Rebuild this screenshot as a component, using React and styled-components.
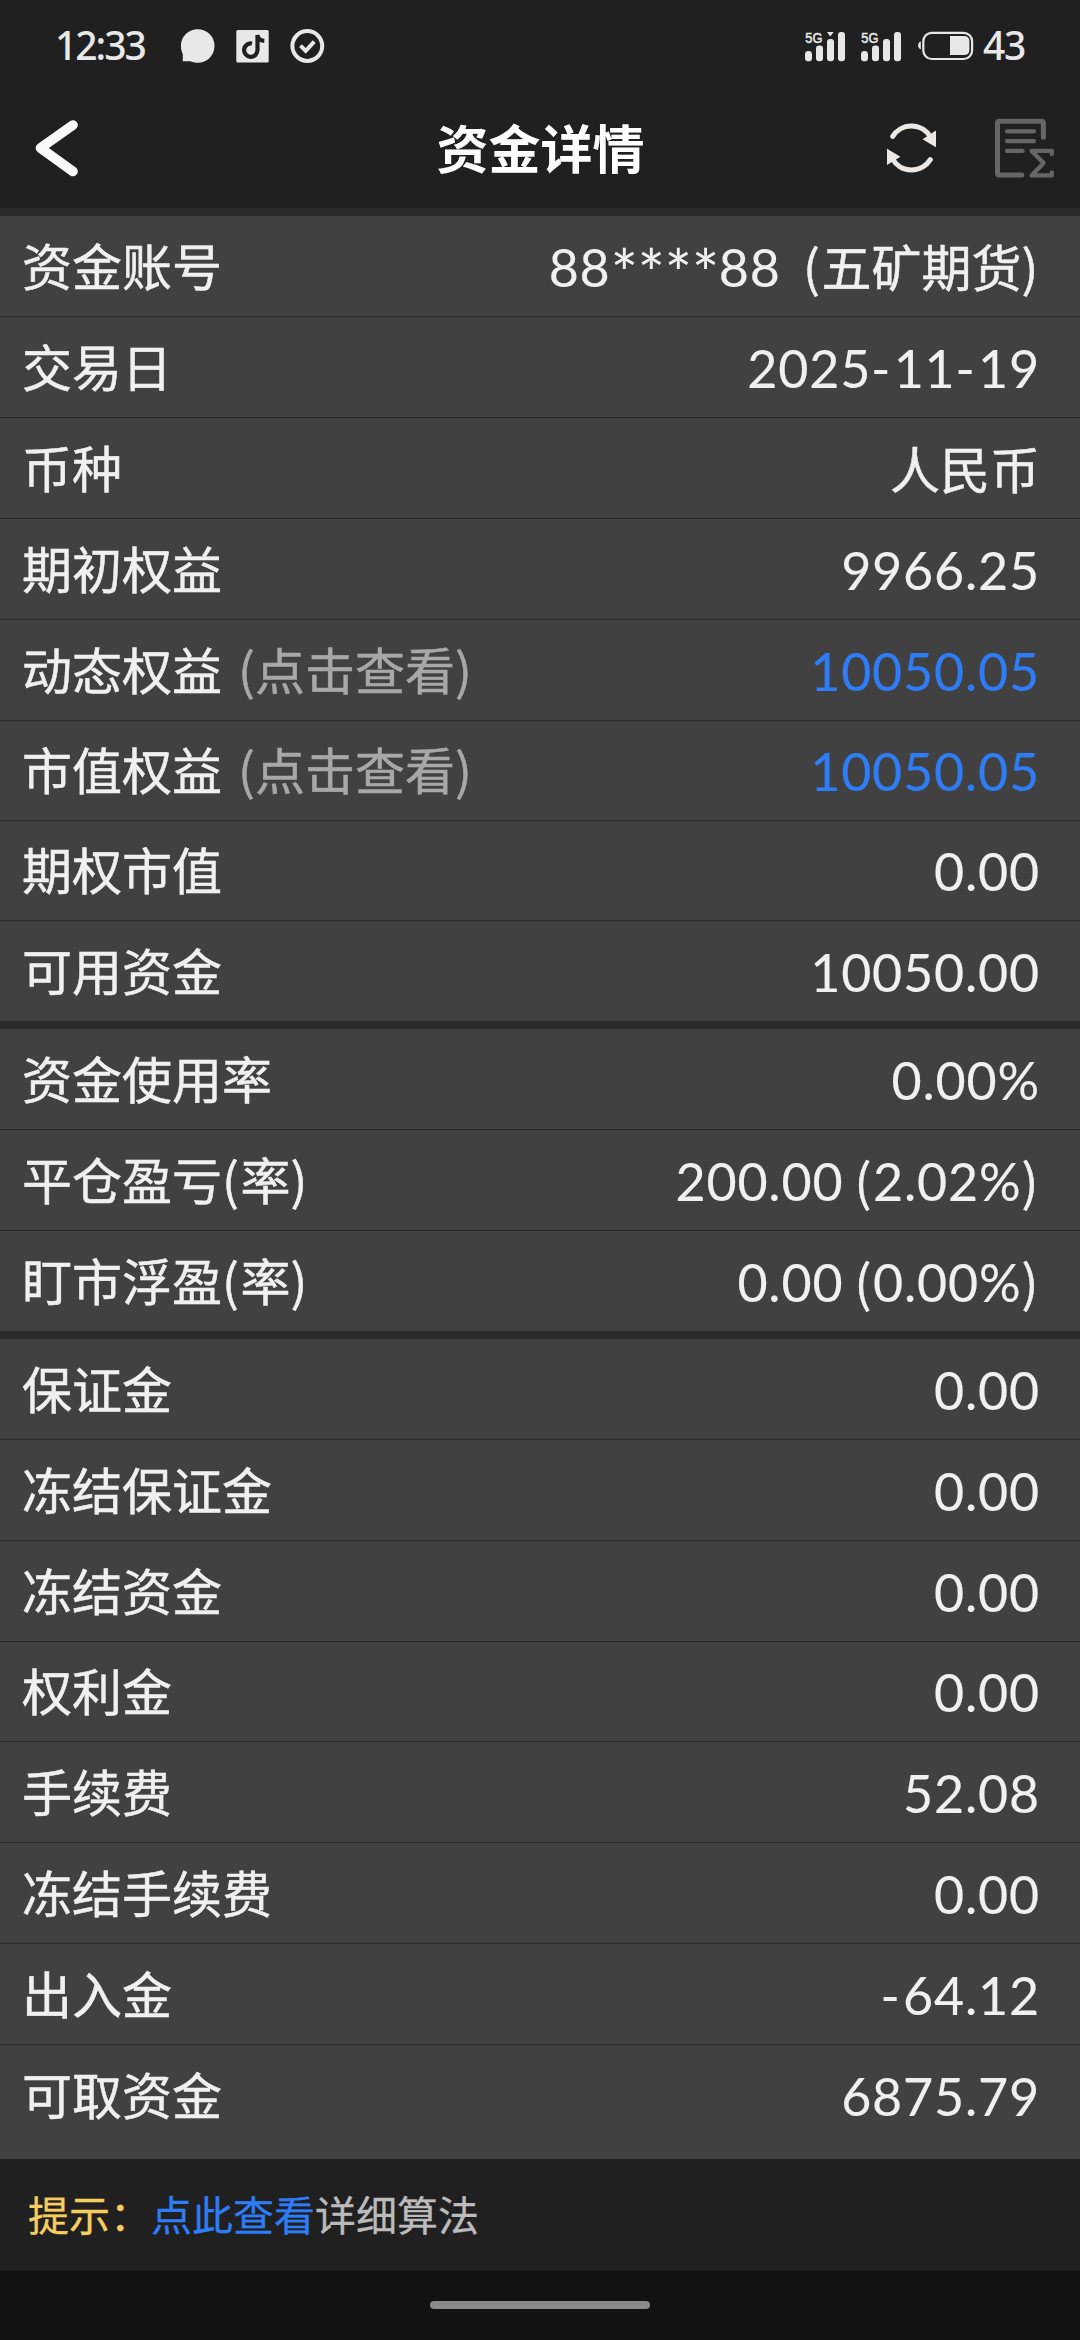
import React from 'react';
import styled, { createGlobalStyle } from 'styled-components';

const GlobalStyle = createGlobalStyle`
  * {
    box-sizing: border-box;
  }
  body {
    margin: 0;
    background-color: #121212;
    font-family: 'Noto Sans CJK SC', sans-serif;
  }
  svg {
    display: block;
    flex-shrink: 0;
  }
`;

const Screen = styled.div`
  display: flex;
  flex-direction: column;
  width: 1080px;
  height: 2340px;
  overflow: hidden;
`;

const StatusBar = styled.div`
  display: flex;
  align-items: center;
  justify-content: space-between;
  height: 92px;
  padding: 0 55px;
  background-color: #202020;
`;

const StatusGroup = styled.div`
  display: flex;
  align-items: center;
`;

const StatusText = styled.span`
  width: ${(props) => props.$width}px;
  padding-bottom: 2px;
  font-family: 'Noto Sans', sans-serif;
  font-size: 39px;
  font-weight: 500;
  line-height: 90px;
  letter-spacing: ${(props) => props.$spacing}px;
  white-space: nowrap;
  color: #e8e8e8;
`;

const NavBar = styled.div`
  display: grid;
  grid-template-columns: 1fr auto 1fr;
  align-items: center;
  height: 116px;
  padding: 0 25px 4px 32px;
  background-color: #202020;
`;

const Title = styled.h1`
  margin: 0 6px 2px 0;
  font-size: 52px;
  font-weight: 700;
  line-height: 76px;
  color: #fff;
`;

const NavActions = styled.div`
  display: flex;
  align-items: center;
  justify-content: flex-end;
  gap: 56px;
`;

const Content = styled.div`
  display: flex;
  flex-direction: column;
  gap: 8px;
  height: 1951px;
  padding-top: 8px;
  background-color: #2a2a2a;
`;

const Section = styled.div`
  display: flex;
  flex-direction: column;
  flex: ${(props) => (props.$fill ? 1 : 'none')};
  background-color: #414141;
`;

const Row = styled.div`
  display: flex;
  align-items: center;
  justify-content: space-between;
  height: ${(props) => props.$height}px;
  padding: 0 40px 3px 22px;
  border-bottom: ${(props) => (props.$last ? 'none' : '1px solid #2a2a2a')};
`;

const Label = styled.div`
  padding-bottom: 2px;
  font-size: 50px;
  line-height: 72px;
  white-space: pre;
  color: #f0f0f0;
  -webkit-text-stroke: 0.5px currentColor;
`;

const Hint = styled.span`
  margin-left: 16px;
  color: #a8a8a8;
`;

const Value = styled.div`
  font-size: 50px;
  line-height: 72px;
  white-space: pre;
  color: ${(props) => (props.$link ? '#2f7df6' : '#f0f0f0')};
  -webkit-text-stroke: 0.5px currentColor;
`;

const Digits = styled.span`
  font-family: Lato, sans-serif;
  font-size: 52px;
  line-height: 0;
  letter-spacing: 0.8px;
  -webkit-text-stroke: 0.1px currentColor;
`;

const Dash = styled(Digits)`
  letter-spacing: 3.2px;
`;

const Bracket = styled.span`
  letter-spacing: 1.6px;
`;

const Mask = styled.span`
  font-family: Lato, sans-serif;
  font-size: 65px;
  line-height: 0;
  letter-spacing: -0.6px;
  vertical-align: -11px;
  -webkit-text-stroke: 0;
`;

const Footer = styled.div`
  display: flex;
  align-items: center;
  height: 112px;
  padding: 0 28px 5px;
  background-color: #202020;
  font-size: 41px;
  line-height: 60px;
`;

const TipText = styled.span`
  color: ${(props) => props.$color};
  -webkit-text-stroke: 0.3px currentColor;
`;

const GestureArea = styled.div`
  display: flex;
  justify-content: center;
  height: 69px;
  padding-top: 30px;
  background-color: #121212;
`;

const GestureBar = styled.div`
  width: 220px;
  height: 8px;
  border-radius: 4px;
  background-color: #8a8a8a;
`;

const AppIcons = () => (
  <svg width="146" height="36" viewBox="180 28 146 36">
    <path d="M182.8 61.2 V54 L181.2 48 L196 46 V61.2 Z" fill="#e8e8e8" />
    <circle cx="197.7" cy="46" r="16.8" fill="#e8e8e8" />
    <rect x="236.3" y="30" width="32.4" height="32.6" rx="1.5" fill="#e8e8e8" />
    <path
      d="M252 43.5 A6.7 6.7 0 1 0 257.5 50 V35 C258 38.5 260.5 40.7 264.3 40.9"
      fill="none"
      stroke="#202020"
      strokeWidth="4.2"
    />
    <circle cx="307.3" cy="46" r="14.9" fill="none" stroke="#e8e8e8" strokeWidth="4" />
    <path d="M300.5 45.6 L305.7 50.8 L314.2 41.6" fill="none" stroke="#e8e8e8" strokeWidth="4" />
  </svg>
);

const NetworkLabel = styled.text`
  font-family: 'Liberation Sans', sans-serif;
  font-size: 14.5px;
  fill: #e8e8e8;
  stroke: #e8e8e8;
  stroke-width: 0.5px;
`;

const Signal = ({ active }) => (
  <svg width="56" height="32" viewBox="0 29 56 32">
    <NetworkLabel x="0.3" y="41.6" textLength="17" lengthAdjust="spacingAndGlyphs">5G</NetworkLabel>
    {active && <path d="M22 31 H28.6 L25.3 35.6 Z" fill="#e8e8e8" />}
    <g fill="#e8e8e8">
      <rect x="0" y="50" width="7" height="10.3" rx="3.4" />
      <rect x="11" y="44.6" width="7" height="15.7" rx="3" />
      <rect x="22" y="38" width="7" height="22.3" rx="3" />
      <rect x="33" y="31" width="7" height="29.3" rx="3" />
    </g>
  </svg>
);

const Battery = () => (
  <svg width="66" height="32" viewBox="917 30 66 32">
    <path d="M920.8 41.6 C917.2 42.5 917.2 48.5 920.8 49.4 Z" fill="#e8e8e8" />
    <rect x="923.3" y="32.8" width="48.8" height="26.2" rx="8.5" fill="none" stroke="#e8e8e8" strokeWidth="2.2" />
    <path d="M950 36 H964 Q969.4 36 969.4 41.5 V49.5 Q969.4 55 964 55 H950 Z" fill="#e8e8e8" />
  </svg>
);

const BackIcon = () => (
  <svg width="48" height="60" viewBox="32 118 48 60">
    <path
      d="M73 125 L40.5 148 L73 171.5"
      fill="none"
      stroke="#fafafa"
      strokeWidth="9.6"
      strokeLinecap="round"
      strokeLinejoin="round"
    />
  </svg>
);

const RefreshIcon = () => (
  <svg width="52" height="60" viewBox="885 118.4 52 60">
    <g fill="none" stroke="#ece8e6" strokeWidth="5" strokeLinecap="round">
      <path d="M891.7 136.8 A22.1 22.1 0 0 1 929.5 137.4" />
      <path d="M929.3 160 A22.1 22.1 0 0 1 891.5 159.4" />
    </g>
    <path d="M935 131 V147.7 L921.5 139.6 Z" fill="#ece8e6" />
    <path d="M886 149.2 V165.4 L899.4 157.2 Z" fill="#ece8e6" />
  </svg>
);

const StatementIcon = () => (
  <svg width="61" height="60" viewBox="993 118.4 61 60">
    <g fill="none" stroke="#666" strokeLinecap="round">
      <path
        d="M1020.8 175.4 H998 Q996.5 175.4 996.5 173.4 V123.6 Q996.5 121.6 998.5 121.6 H1040.4 Q1042.4 121.6 1042.4 123.6 V137.6"
        strokeWidth="5"
      />
      <path d="M1006 131.7 H1033 M1006 141.5 H1033 M1006 151.3 H1021.6" strokeWidth="4.2" />
      <path
        d="M1050.8 154.4 V151.3 H1030.6 L1042.6 163.5 L1030.6 175.8 H1050.8 V172.8"
        strokeWidth="4.3"
        strokeLinejoin="round"
      />
    </g>
  </svg>
);

// digits use the latin face, brackets and chinese stay in the page font
const MixedText = ({ text }) =>
  text.split(/(\*+|-|[()]|[\d.%]+)/).map((part, i) => {
    if (part.startsWith('*')) return <Mask key={i}>{part}</Mask>;
    if (part === '-') return <Dash key={i}>{part}</Dash>;
    if (part === '(' || part === ')') return <Bracket key={i}>{part}</Bracket>;
    if (/^[\d.%]/.test(part)) return <Digits key={i}>{part}</Digits>;
    return part;
  });

const sections = [
  [
    { label: '资金账号', value: '88****88  (五矿期货)' },
    { label: '交易日', value: '2025-11-19' },
    { label: '币种', value: '人民币' },
    { label: '期初权益', value: '9966.25' },
    { label: '动态权益', hint: '(点击查看)', value: '10050.05', link: true },
    { label: '市值权益', hint: '(点击查看)', value: '10050.05', link: true, height: 100 },
    { label: '期权市值', value: '0.00', height: 100 },
    { label: '可用资金', value: '10050.00' },
  ],
  [
    { label: '资金使用率', value: '0.00%' },
    { label: '平仓盈亏(率)', value: '200.00 (2.02%)' },
    { label: '盯市浮盈(率)', value: '0.00 (0.00%)' },
  ],
  [
    { label: '保证金', value: '0.00' },
    { label: '冻结保证金', value: '0.00' },
    { label: '冻结资金', value: '0.00' },
    { label: '权利金', value: '0.00', height: 100 },
    { label: '手续费', value: '52.08' },
    { label: '冻结手续费', value: '0.00' },
    { label: '出入金', value: '-64.12' },
    { label: '可取资金', value: '6875.79' },
  ],
];

function App() {
  return (
    <Screen>
      <GlobalStyle />
      <StatusBar>
        <StatusGroup>
          <StatusText $width={125} $spacing={-2}>12:33</StatusText>
          <AppIcons />
        </StatusGroup>
        <StatusGroup>
          <Signal active />
          <Signal />
          <Battery />
          <StatusText $width={42} $spacing={-1.2}>43</StatusText>
        </StatusGroup>
      </StatusBar>
      <NavBar>
        <BackIcon />
        <Title>资金详情</Title>
        <NavActions>
          <RefreshIcon />
          <StatementIcon />
        </NavActions>
      </NavBar>
      <Content>
        {sections.map((rows, index) => (
          <Section key={index} $fill={index === sections.length - 1}>
            {rows.map((row, i) => {
              const last = i === rows.length - 1;
              return (
                <Row key={row.label} $last={last} $height={last ? 100 : row.height || 101}>
                  <Label>
                    <MixedText text={row.label} />
                    {row.hint && <Hint>{row.hint}</Hint>}
                  </Label>
                  <Value $link={row.link}>
                    <MixedText text={row.value} />
                  </Value>
                </Row>
              );
            })}
          </Section>
        ))}
      </Content>
      <Footer>
        <TipText $color="#f6cd61">提示：</TipText>
        <TipText $color="#2f7df6">点此查看</TipText>
        <TipText $color="#bbbbbb">详细算法</TipText>
      </Footer>
      <GestureArea>
        <GestureBar />
      </GestureArea>
    </Screen>
  );
}

export default App;
